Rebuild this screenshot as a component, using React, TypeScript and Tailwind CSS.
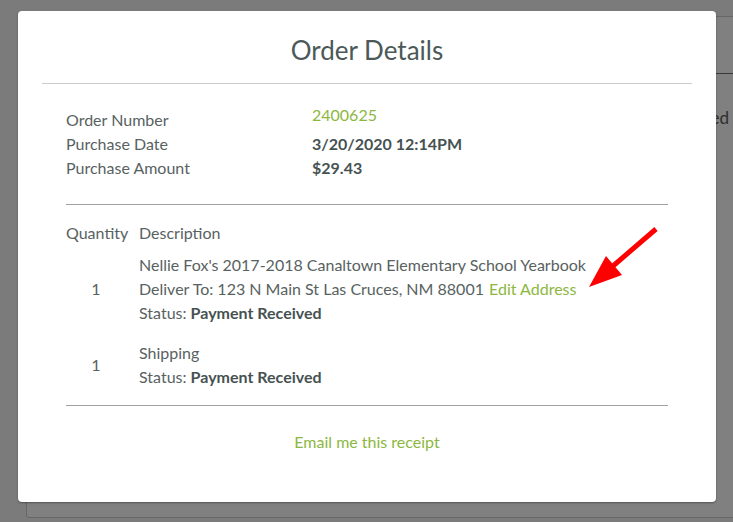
import React from "react";

export default function App() {
  const font = { fontFamily: "Lato, 'Open Sans', sans-serif" };
  return (
    <div className="relative w-[733px] h-[522px] overflow-hidden bg-[#7b7b7b]" style={font}>
      {/* page behind overlay */}
      <div className="absolute left-[26px] top-[16px] w-[760px] h-[502px] rounded-[3px] border border-[#666666] bg-[#808080]">
        <div className="mt-[56px] border-b border-[#3a3a3a]" />
      </div>
      <div className="absolute right-[4px] top-[106px] text-[17px] leading-[24px] text-[#2e2e2e]">Completed</div>

      {/* modal */}
      <div className="relative pt-[11px] pl-[18px]">
        <div className="w-[698px] h-[491px] rounded-[4px] bg-white shadow-[0_1px_2px_rgba(0,0,0,0.35)] flex flex-col">
          <div className="mx-[24px] pt-[23px] pb-[17px] border-b border-[#cccccc] text-center">
            <h1 className="text-[26px] leading-[32px] text-[#4b5959] font-normal">Order Details</h1>
          </div>

          <div className="mx-[48px] flex flex-col">
            <div className="pt-[24px] pb-[24px] border-b border-[#a0a0a0] text-[16px] leading-[24px] text-[#58625f]">
              <div className="grid grid-cols-[246px_1fr]">
                <div>Order Number</div>
                <div className="-mt-[5px] text-[#8cb740]">2400625</div>
                <div>Purchase Date</div>
                <div className="font-bold text-[#465252]">3/20/2020 12:14PM</div>
                <div>Purchase Amount</div>
                <div className="font-bold text-[#465252]">$29.43</div>
              </div>
            </div>

            <div className="pt-[16px] pb-[16px] border-b border-[#a0a0a0] text-[16px] leading-[24px] text-[#58625f]">
              <div className="grid grid-cols-[66px_1fr] gap-x-[7px]">
                <div>Quantity</div>
                <div>Description</div>

                <div className="mt-[8px] pr-[6px] flex items-center justify-center">1</div>
                <div className="mt-[8px] flex flex-col">
                  <div>Nellie Fox's 2017-2018 Canaltown Elementary School Yearbook</div>
                  <div>
                    Deliver To: 123 N Main St Las Cruces, NM 88001{" "}
                    <span className="ml-[1px] text-[#8cb740]">Edit Address</span>
                  </div>
                  <div>
                    Status: <span className="font-bold text-[#465252]">Payment Received</span>
                  </div>
                </div>

                <div className="mt-[16px] pr-[6px] flex items-center justify-center">1</div>
                <div className="mt-[16px] flex flex-col">
                  <div>Shipping</div>
                  <div>
                    Status: <span className="font-bold text-[#465252]">Payment Received</span>
                  </div>
                </div>
              </div>
            </div>

            <div className="pt-[24px] text-center text-[16px] leading-[24px] text-[#8cb740]">
              Email me this receipt
            </div>
          </div>
        </div>
      </div>

      {/* red annotation arrow */}
      <svg className="absolute left-0 top-0" width="733" height="522" viewBox="0 0 733 522">
        <line x1="656" y1="229" x2="606" y2="272" stroke="#ff0000" strokeWidth="5" />
        <polygon points="589,287 606,256 622,275" fill="#ff0000" />
      </svg>
    </div>
  );
}
